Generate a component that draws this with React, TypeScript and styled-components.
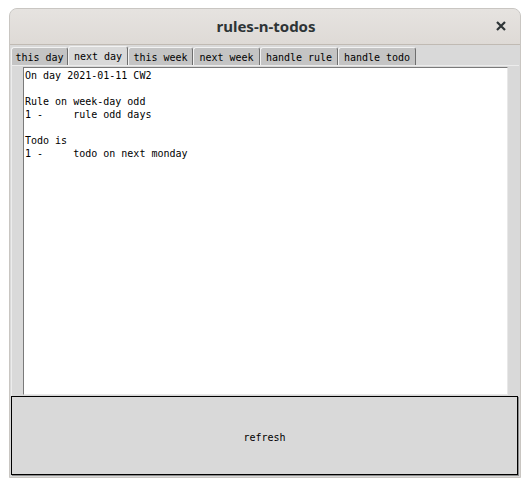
import React from "react";
import styled, { createGlobalStyle } from "styled-components";

const Global = createGlobalStyle`
  html, body { margin: 0; padding: 0; background: #ffffff; }
  #root { width: 530px; height: 487px; }
`;

const Page = styled.div`
  width: 530px;
  height: 487px;
  padding: 8px 0 0 9px;
  box-sizing: border-box;
`;

const Window = styled.div`
  width: 512px;
  height: 470px;
  box-sizing: border-box;
  border: 1px solid #c9c6c2;
  border-radius: 8px 8px 0 0;
  display: flex;
  flex-direction: column;
  overflow: hidden;
  background: #d9d9d9;
`;

const TitleBar = styled.div`
  height: 36px;
  flex: 0 0 36px;
  box-sizing: border-box;
  border-bottom: 1px solid #c0bab3;
  background: linear-gradient(#e6e3e0, #dedad6);
  display: flex;
  align-items: center;
  justify-content: center;
  position: relative;
`;

const Title = styled.div`
  font-family: "Noto Sans", "DejaVu Sans", sans-serif;
  font-weight: bold;
  font-size: 15px;
  color: #2e3436;
  margin-left: 2px;
  margin-top: -2px;
`;

const Close = styled.div`
  position: absolute;
  right: 14px;
  top: 12px;
  width: 10px;
  height: 10px;
  display: flex;
`;

const Body = styled.div`
  flex: 1;
  display: flex;
  flex-direction: column;
  padding: 1px 1px 1px 1px;
  background: #d9d9d9;
`;

const TabRow = styled.div`
  display: flex;
  height: 19px;
  align-items: flex-end;
`;

const Tab = styled.div<{ $active?: boolean; $w: number }>`
  width: ${(p) => p.$w}px;
  height: ${(p) => (p.$active ? 19 : 18)}px;
  box-sizing: border-box;
  background: ${(p) => (p.$active ? "#d9d9d9" : "#c4c4c4")};
  border-top: 1px solid #f2f2f2;
  border-left: 1px solid #f2f2f2;
  border-right: 1px solid #6e6e6e;
  border-radius: 3px 3px 0 0;
  font-family: "DejaVu Sans Mono", "Liberation Mono", monospace;
  font-size: 10px;
  color: #000;
  display: flex;
  align-items: center;
  justify-content: center;
  padding-top: 1px;
  white-space: nowrap;
`;

const Panel = styled.div`
  flex: 1;
  display: flex;
  flex-direction: column;
  padding: 1px 11px 1px 11px;
  border-left: 1px solid #ececec;
  border-top: 1px solid #ececec;
`;

const TextArea = styled.div`
  flex: 1;
  background: #ffffff;
  border-top: 1px solid #7a7a7a;
  border-left: 1px solid #7a7a7a;
  border-right: 1px solid #e8e8e8;
  border-bottom: 1px solid #e8e8e8;
  padding: 1px 1px;
  font-family: "DejaVu Sans Mono", "Liberation Mono", monospace;
  font-size: 10px;
  line-height: 13px;
  color: #000;
  white-space: pre;
`;

const Line = styled.div`
  height: 13px;
`;

const RefreshButton = styled.div`
  height: 79px;
  flex: 0 0 79px;
  box-sizing: border-box;
  background: #d9d9d9;
  border: 1px solid #000;
  box-shadow: 1px 1px 0 #8a8a8a;
  margin-right: 1px;
  margin-bottom: 1px;
  display: flex;
  align-items: center;
  justify-content: center;
  padding-top: 3px;
  font-family: "DejaVu Sans Mono", "Liberation Mono", monospace;
  font-size: 10px;
  color: #000;
`;

const tabs: { label: string; w: number; active?: boolean }[] = [
  { label: "this day", w: 57 },
  { label: "next day", w: 60, active: true },
  { label: "this week", w: 65 },
  { label: "next week", w: 67 },
  { label: "handle rule", w: 78 },
  { label: "handle todo", w: 78 },
];

const lines = [
  "On day 2021-01-11 CW2",
  "",
  "Rule on week-day odd",
  "1 -     rule odd days",
  "",
  "Todo is",
  "1 -     todo on next monday",
];

export default function App() {
  return (
    <>
      <Global />
      <Page>
        <Window>
          <TitleBar>
            <Title>rules-n-todos</Title>
            <Close>
              <svg width="10" height="10" viewBox="0 0 10 10">
                <path d="M1 1 L9 9 M9 1 L1 9" stroke="#2e3436" strokeWidth="2.2" strokeLinecap="butt" />
              </svg>
            </Close>
          </TitleBar>
          <Body>
            <TabRow>
              {tabs.map((t) => (
                <Tab key={t.label} $active={t.active} $w={t.w}>
                  {t.label}
                </Tab>
              ))}
            </TabRow>
            <Panel>
              <TextArea>
                {lines.map((l, i) => (
                  <Line key={i}>{l}</Line>
                ))}
              </TextArea>
            </Panel>
            <RefreshButton>refresh</RefreshButton>
          </Body>
        </Window>
      </Page>
    </>
  );
}
